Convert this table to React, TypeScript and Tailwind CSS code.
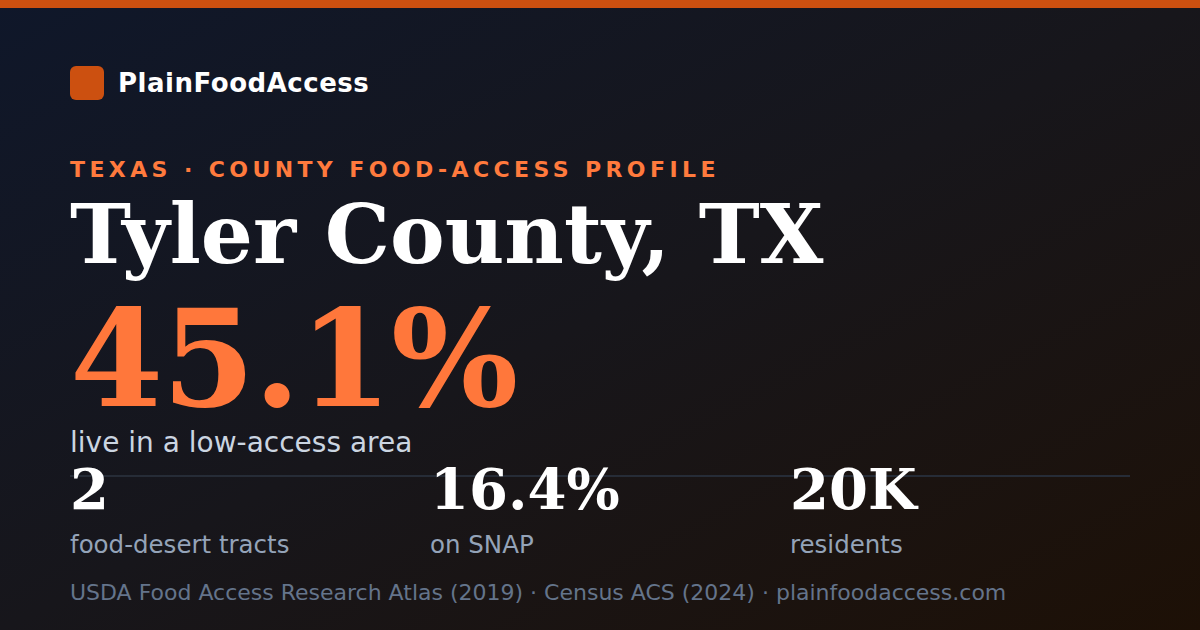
import React from 'react';

const stats = [
  { value: '2', label: 'food-desert tracts' },
  { value: '16.4%', label: 'on SNAP' },
  { value: '20K', label: 'residents' },
];

const sans = "font-['DejaVu_Sans','Noto_Sans',sans-serif]";
const serif = "font-['DejaVu_Serif','Liberation_Serif',serif]";

const App: React.FC = () => {
  return (
    <div className="w-[1200px] h-[630px] overflow-hidden flex flex-col bg-gradient-to-br from-[#0f172a] via-[#17161b] to-[#1d1006]">
      <div className="h-2 bg-[#cc5010]" />

      <div className={`flex flex-col px-[70px] ${sans}`}>
        <div className="mt-[58px] flex items-center gap-[14px] h-[34px]">
          <div className="w-[34px] h-[34px] rounded-[6px] bg-[#cc5010]" />
          <span className="text-[26px] font-bold tracking-[0.02em] text-white leading-none">PlainFoodAccess</span>
        </div>

        <div className="mt-[59px] text-[22px] leading-none font-bold tracking-[0.2em] text-[#ff7a3d]">
          TEXAS · COUNTY FOOD-ACCESS PROFILE
        </div>

        <h1 className={`mt-[12px] text-[82px] leading-none font-bold text-white ${serif}`}>
          Tyler County, TX
        </h1>

        <div className={`mt-[17px] h-[134px] text-[134px] leading-none font-bold tracking-[-0.01em] text-[#ff773b] ${serif}`}>
          45.1%
        </div>

        <div className="mt-[3px] text-[28px] leading-none text-[#cbd5e1]">live in a low-access area</div>

        <div className="mt-[18px] border-t-2 border-[#262c37] grid grid-cols-[360px_360px_1fr] w-[1060px]">
          {stats.map((s) => (
            <div key={s.label} className="-mt-[16px] flex flex-col">
              <div className={`text-[56px] leading-none font-bold text-white ${serif}`}>{s.value}</div>
              <div className="mt-[16px] text-[24.5px] leading-none text-[#94a3b8]">{s.label}</div>
            </div>
          ))}
        </div>

        <div className="mt-[24px] text-[22px] leading-none text-[#64748b]">
          USDA Food Access Research Atlas (2019) · Census ACS (2024) · plainfoodaccess.com
        </div>
      </div>
    </div>
  );
};

export default App;
